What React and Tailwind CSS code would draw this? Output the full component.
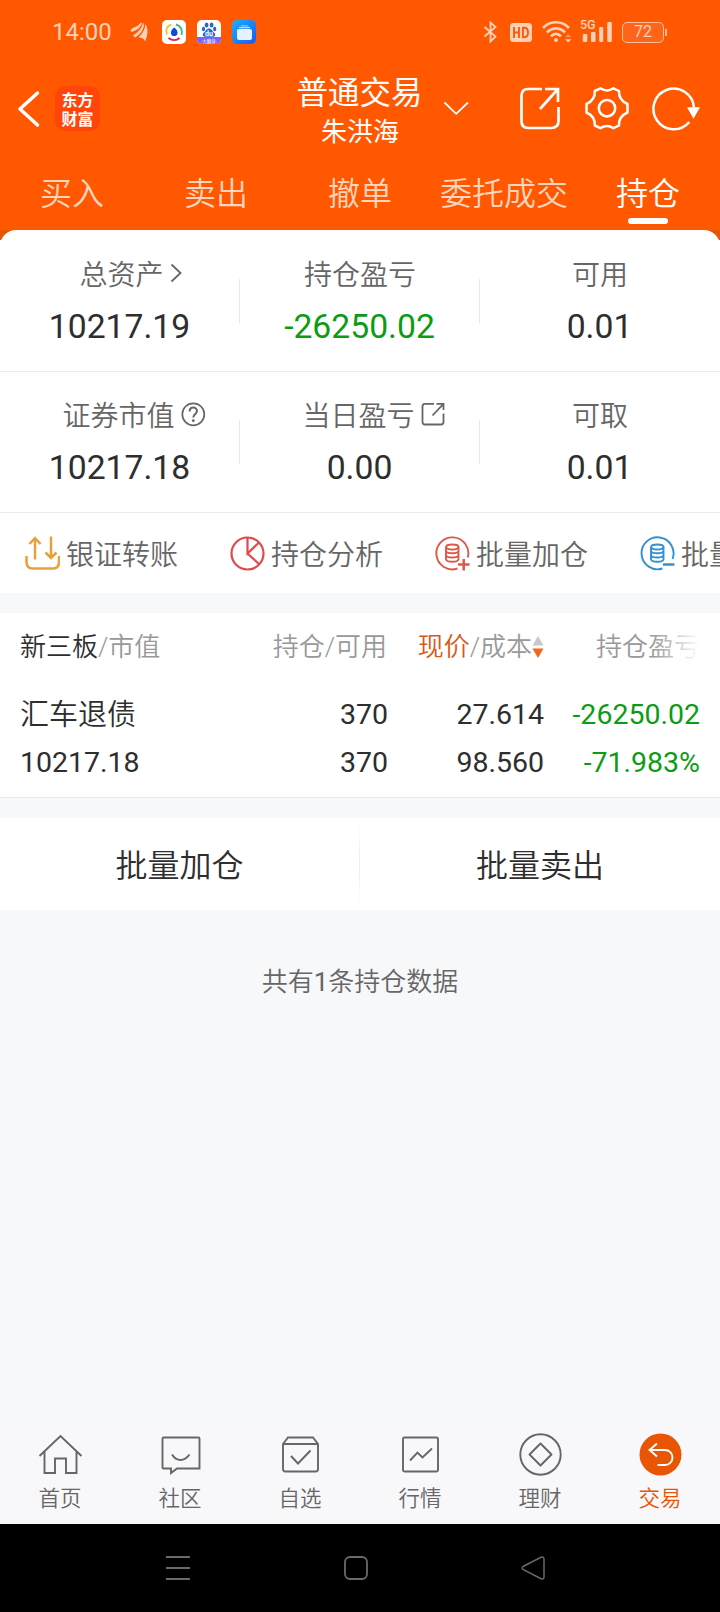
import React, { useState } from "react";
import clsx from "clsx";

const tabs = ["买入", "卖出", "撤单", "委托成交", "持仓"];

const assets = [
  [
    { label: "总资产", value: "10217.19", icon: "arrow" },
    { label: "持仓盈亏", value: "-26250.02", down: true },
    { label: "可用", value: "0.01" },
  ],
  [
    { label: "证券市值", value: "10217.18", icon: "help" },
    { label: "当日盈亏", value: "0.00", icon: "share" },
    { label: "可取", value: "0.01" },
  ],
];

const StatusBar = () => {
  return (
    <div className="flex h-16 items-center pl-[52px] text-[#ffd2b8]">
      <span className="w-[78px] text-[24px] leading-none">14:00</span>
      <svg width="18" height="20" viewBox="0 0 18 20" fill="currentColor">
        <path d="M.5 8.500C2 5.500 6 5 8 3.500C9 2.500 10 1 12 .5C11.500 5 7 8.500 1.500 10Z" />
        <path d="M3 13.500C8 10.500 12 6 13.300.5C15.500 5.500 10.500 13 5 15.500Z" />
        <path d="M8.500 15.500C12.500 11.500 15.300 7 15.300 2C18.800 6 17.500 15 15 19.500C14.500 17 12 15.500 8.500 15.500Z" />
      </svg>
      <svg className="ml-[14px]" width="24" height="24" viewBox="0 0 24 24" fill="none">
        <rect width="24" height="24" rx="5" fill="#fff" />
        <path d="M5 14.500C3 10 5 5.500 9.500 4.500" stroke="#f3c52e" strokeWidth="1.800" />
        <path d="M14 4.500C18.500 5.500 21 10 19.500 15" stroke="#36b98b" strokeWidth="1.800" />
        <path d="M6.500 18C10 20.800 14.500 20.800 17.500 18" stroke="#d5254f" strokeWidth="2" />
        <path d="M12.200 7.500C14.500 9 16 11.500 15.500 13.500C15 15.500 14 16 12.200 16C10.400 16 9.500 15.500 9 13.500C8.500 11.500 10 9 12.200 7.500Z" fill="#0b4fd0" />
      </svg>
      <svg className="ml-[11px]" width="24" height="24" viewBox="0 0 24 24">
        <rect width="24" height="24" rx="5" fill="#fff" />
        <path d="M0 17H24V19A5 5 0 0 1 19 24H5A5 5 0 0 1 0 19Z" fill="#7a62f4" />
        <g fill="#2468c8">
          <ellipse cx="9.600" cy="5" rx="1.900" ry="2.500" />
          <ellipse cx="14.600" cy="5" rx="1.900" ry="2.500" />
          <ellipse cx="6.500" cy="9" rx="1.600" ry="2.200" />
          <ellipse cx="17.700" cy="9" rx="1.600" ry="2.200" />
          <path d="M12 8.500C14.500 8.500 15 11 17 12.500C19.500 14.500 18 17 15 16.800H9C6 17 4.500 14.500 7 12.500C9 11 9.500 8.500 12 8.500Z" />
        </g>
        <text x="12" y="16" textAnchor="middle" fontSize="7" fontWeight="700" fill="#fff">du</text>
        <text x="12" y="22.500" textAnchor="middle" fontSize="4.500" fill="#fff">·大翻身·</text>
      </svg>
      <svg className="ml-[11px]" width="24" height="24" viewBox="0 0 24 24">
        <defs>
          <linearGradient id="wallet" x1="0" y1="0" x2="1" y2="1">
            <stop offset="0" stopColor="#1fb0f5" />
            <stop offset="1" stopColor="#1559f5" />
          </linearGradient>
        </defs>
        <rect width="24" height="24" rx="5" fill="url(#wallet)" />
        <rect x="9" y="5" width="7" height="1.200" rx=".6" fill="#6fc0fb" />
        <rect x="7" y="6.800" width="11" height="1.500" rx=".7" fill="#b4dcfd" />
        <rect x="5" y="9" width="15" height="11" rx="2" fill="#e6f2ff" />
      </svg>

      {/* right side */}
      <svg className="ml-[227px]" width="15" height="22" viewBox="0 0 15 22" fill="none" stroke="currentColor" strokeWidth="1.800">
        <path d="M1.500 6L12.500 15.500L7.500 20.500V1.500L12.500 6L1.500 15.500" />
      </svg>
      <svg className="ml-3" width="22" height="19" viewBox="0 0 22 19">
        <rect width="22" height="19" rx="3.500" fill="currentColor" />
        <path d="M4 4V15M9 4V15M4 9.500H9M13 4.800V14.200H14.500C17 14.200 18 12.500 18 9.500S17 4.800 14.500 4.800Z" fill="none" stroke="#ff5a05" strokeWidth="1.900" />
      </svg>
      <svg className="ml-[10px]" width="30" height="24" viewBox="0 0 30 24" fill="none" stroke="currentColor" strokeWidth="2.700">
        <path d="M1 8C8 .3 20 .3 27 8M5 12.500C10 7 18 7 23 12.500M9 16.300C12 13 16 13 19 16.300" />
        <circle cx="14" cy="20" r="2" fill="currentColor" stroke="none" />
        <path d="M23 17.300L26.200 14L29.500 17.300Z" fill="#ff9260" stroke="none" />
        <path d="M23 19.200L26.200 22.500L29.500 19.200Z" fill="currentColor" stroke="none" />
      </svg>
      <div className="relative ml-[9px] h-[22px] w-[32px]">
        <span className="absolute -left-px -top-[2px] text-[12.5px] font-medium leading-none">5G</span>
        <svg width="32" height="22" viewBox="0 0 32 22" fill="currentColor">
          <rect x="1.800" y="13" width="4.500" height="8" rx="1" />
          <rect x="10" y="11" width="4.500" height="10" rx="1" />
          <rect x="18.200" y="6" width="4" height="15" rx="1" />
          <rect x="26.300" y="1" width="4.500" height="20" rx="1" />
        </svg>
      </div>
      <div className="ml-[9px] flex h-[21px] w-[42px] items-center justify-center rounded-[5px] border-[1.5px] border-[#ffc09b] bg-[#ff651a] text-[16px] leading-none">
        72
      </div>
      <span className="ml-px h-[7px] w-[2px] bg-[#ffc09b]" />
    </div>
  );
};

const Header = () => {
  return (
    <div className="flex h-[88px] text-white">
      <svg className="ml-[17px] mt-[26px]" width="23" height="38" viewBox="0 0 23 38" fill="none" stroke="currentColor" strokeWidth="3.500" strokeLinecap="round" strokeLinejoin="round">
        <path d="M20.500 3L3 19L20.500 35" />
      </svg>
      <div className="ml-[15px] mt-[22px] flex h-[45px] w-[45px] items-center justify-center rounded-[10px] bg-[#ff4509] text-center font-['Noto_Sans_CJK_SC',sans-serif] text-[16px] font-bold leading-[19px]">
        <span>
          东方
          <br />
          财富
        </span>
      </div>
      <div className="ml-[160px] mt-[10px] flex w-[200px] flex-col items-center">
        <span className="mr-px text-[31.5px] leading-[40px]">普通交易</span>
        <span className="text-[26px] leading-[36px]">朱洪海</span>
      </div>
      <svg className="-ml-[17px] mt-[36px]" width="26" height="16" viewBox="0 0 26 16" fill="none" stroke="currentColor" strokeWidth="1.800">
        <path d="M1.500 2.500L13.200 13.800L25 2.500" />
      </svg>
      <svg className="ml-[50px] mt-[23px]" width="42" height="43" viewBox="0 0 42 43" fill="none" stroke="currentColor" strokeWidth="2.700">
        <path d="M23 2H9Q2.500 2 2.500 9V34Q2.500 41 9 41H32Q39.500 41 39.500 34V20" />
        <path d="M26 2H39V15M38.500 2.500L21 22" />
      </svg>
      <svg className="ml-[24px] mt-[22px]" width="46" height="45" viewBox="0 0 46 45" fill="none" stroke="currentColor" strokeWidth="2.500" strokeLinejoin="round">
        <path d="M15.500 2.300Q21.900 6.500 28.500 2.300L34 5Q33.500 14 42.500 18V26.500Q33.500 30.500 34 39.500L28.500 42.200Q21.900 38 15.500 42.200L9.800 39.500Q10.300 30.500 1.500 26.500V18Q10.300 14 9.800 5Z" />
        <circle cx="22" cy="22.200" r="8.200" />
      </svg>
      <svg className="ml-[21px] mt-[22px]" width="50" height="46" viewBox="0 0 50 46" fill="none" stroke="currentColor" strokeWidth="2.500">
        <path d="M37.300 36A20.300 20.300 0 1 1 42 21.500" />
        <path d="M35 21.300H48L41.500 32.800Z" fill="currentColor" stroke="none" />
      </svg>
    </div>
  );
};

const ShareIcon = ({ className }) => (
  <svg className={className} width="24" height="24" viewBox="0 0 24 24" fill="none" stroke="#666" strokeWidth="1.800">
    <path d="M13 1.800H4Q1.500 1.800 1.500 4.500V20Q1.500 22.500 4 22.500H20Q22.500 22.500 22.500 20V11.500" />
    <path d="M15.500 1.800H22.500V8M22.500 1.800L11.500 13.500" />
  </svg>
);

const LabelIcon = ({ icon }) => {
  if (icon === "arrow")
    return (
      <svg className="absolute left-full top-[7px] ml-[6px]" width="13" height="20" viewBox="0 0 13 20" fill="none" stroke="#666" strokeWidth="1.800">
        <path d="M1.500 1.500L10.500 10L1.500 18.500" />
      </svg>
    );
  if (icon === "help")
    return (
      <svg className="absolute left-full top-[5px] ml-[6px]" width="25" height="25" viewBox="0 0 25 25" fill="none" stroke="#666" strokeWidth="1.700">
        <circle cx="12.300" cy="12.300" r="11" />
        <path d="M8.600 9.500C8.600 4.300 16 4.500 16 9C16 12 12.300 12 12.300 15.500" strokeWidth="2" />
        <circle cx="12.300" cy="18.700" r="1.400" fill="#666" stroke="none" />
      </svg>
    );
  if (icon === "share") return <ShareIcon className="absolute left-full top-[5px] ml-[6px]" />;
  return null;
};

const AssetRow = ({ items }) => {
  return (
    <div className="flex h-[141px] shadow-[0_1px_0_#ebebeb]">
      {items.map((item, index) => (
        <div key={item.label} className="relative flex w-[240px] flex-col items-center pt-[26px]">
          <span
            className={clsx(
              "relative text-[28px] font-[350] leading-[40px] text-[#666]",
              item.icon === "arrow" && "ml-[3px]",
              (item.icon === "help" || item.icon === "share") && "mr-[3px]"
            )}
          >
            {item.label}
            <LabelIcon icon={item.icon} />
          </span>
          <span
            className={clsx(
              "mr-px mt-[11px] text-[33.7px] leading-[40px]",
              item.down ? "text-[#0c9c13]" : "text-[#2e2e2e]"
            )}
          >
            {item.value}
          </span>
          {index < 2 && <div className="absolute right-0 top-[49px] h-[44px] w-px bg-[#e8e8e8]" />}
        </div>
      ))}
    </div>
  );
};

const CoinIcon = ({ color, minus }) => (
  <svg width="35" height="35" viewBox="0 0 35 35" fill="none" stroke={color} strokeWidth="1.900">
    <path d={minus ? "M32.500 23A16 16 0 1 0 22.500 32.500" : "M32.800 21.500A16 16 0 1 0 22.500 32.500"} />
    <ellipse cx="17.300" cy="11" rx="6.200" ry="2.500" />
    <path d="M11 11V23.500C12 26.500 22.500 26.500 23.500 23.500V11M11 15C12 18 22.500 18 23.500 15M11 19.300C12 22.300 22.500 22.300 23.500 19.300" />
    <path d={minus ? "M23 28.500H34.500" : "M23 28.500H34.500M28.700 23V34.500"} strokeWidth="2.500" />
  </svg>
);

const Shortcuts = () => {
  return (
    <div className="flex h-[81px] overflow-hidden whitespace-nowrap pl-[25px] pt-[24px] text-[28px] font-[350] leading-[40px] text-[#666]">
      <div className="flex w-[205px] shrink-0 gap-[6px]">
        <svg width="35" height="35" viewBox="0 0 35 35" fill="none" stroke="#e8a03c" strokeWidth="2.500">
          <path d="M1.500 20V26Q1.500 32.500 8 32.500H27.500Q34 32.500 34 26V20" />
          <path d="M10 23.500V2M4.500 8L10 2L15.500 8M26 .5V22M20.500 16.500L26 22L31.500 16.500" />
        </svg>
        <span>银证转账</span>
      </div>
      <div className="flex w-[205px] shrink-0 gap-[6px]">
        <svg width="35" height="35" viewBox="0 0 35 35" fill="none" stroke="#df4a4d" strokeWidth="2.200">
          <circle cx="17.500" cy="17.500" r="16" />
          <path d="M17.500 1.500V17.500L29 6.500M17.500 17.500L29.500 28.500" />
        </svg>
        <span>持仓分析</span>
      </div>
      <div className="flex w-[205px] shrink-0 gap-[6px]">
        <CoinIcon color="#de5847" />
        <span>批量加仓</span>
      </div>
      <div className="flex w-[205px] shrink-0 gap-[6px]">
        <CoinIcon color="#3390d2" minus />
        <span>批量卖出</span>
      </div>
    </div>
  );
};

const Holdings = () => {
  return (
    <div className="mt-5 h-[185px] border-b border-[#e9eaec] bg-white pl-[20px] text-[#2e2e2e]">
      <div className="flex pt-[15px] text-[26px] font-[350] leading-[38px] text-[#999]">
        <div className="w-[180px]">
          <span className="text-[#2e2e2e]">新三板</span>/市值
        </div>
        <div className="w-[187px] text-right">持仓/可用</div>
        <div className="flex w-[157px] items-center justify-end">
          <span>
            <span className="text-[#d95a17]">现价</span>/成本
          </span>
          <svg width="12" height="24" viewBox="0 0 12 24">
            <path d="M6 1L11.500 10.500H.5Z" fill="#c8c8c8" />
            <path d="M6 23L11.500 13.500H.5Z" fill="#f3651a" />
          </svg>
        </div>
        <div className="relative ml-[52px] w-[104px] overflow-hidden whitespace-nowrap">
          持仓盈亏
          <div className="absolute right-0 top-0 h-full w-[48px] bg-linear-to-r from-white/0 to-white" />
        </div>
      </div>
      <div className="flex pt-[25px] text-[28.5px] leading-[48px]">
        <div className="w-[180px]">
          <div className="text-[29px] font-[350]">汇车退债</div>
          <div>10217.18</div>
        </div>
        <div className="w-[188px] text-right">
          <div>370</div>
          <div>370</div>
        </div>
        <div className="w-[156px] text-right">
          <div>27.614</div>
          <div>98.560</div>
        </div>
        <div className="w-[156px] text-right text-[#0c9c13]">
          <div>-26250.02</div>
          <div>-71.983%</div>
        </div>
      </div>
    </div>
  );
};

const navItems = [
  {
    label: "首页",
    icon: <path d="M1.500 24L22.500 4L43.500 24M6.500 20V41H17V26.500H28V41H38.500V20" />,
  },
  {
    label: "社区",
    icon: (
      <path d="M5.500 5.500H40.500Q41.500 5.500 41.500 6.500V36.500H19L13 41V36.500H5.500Q4.500 36.500 4.500 35.500V6.500Q4.500 5.500 5.500 5.500ZM14 22.500Q17.500 28 22.500 28T31.500 22.500" />
    ),
  },
  {
    label: "自选",
    icon: (
      <path d="M5 12L10 5.500H35L40 12V37Q40 39.500 37.500 39.500H7.500Q5 39.500 5 37ZM5 12H40M13 24L20 31.500L32.500 18.500" />
    ),
  },
  {
    label: "行情",
    icon: (
      <>
        <rect x="5" y="5.500" width="35" height="34" rx="1.500" />
        <path d="M12 28.500L19.500 20.500L24.500 25.500L34 16.500" />
      </>
    ),
  },
  {
    label: "理财",
    icon: (
      <>
        <circle cx="22.500" cy="22.500" r="20.200" />
        <path d="M22.500 11.500L33.500 22.500L22.500 33.500L11.500 22.500Z" strokeLinejoin="round" />
      </>
    ),
  },
  {
    label: "交易",
    icon: (
      <>
        <circle cx="22.500" cy="22.500" r="21" fill="#ea5504" stroke="none" />
        <path d="M19 11.500L11.500 18L19 24.500M11.500 18H27A7.500 7.500 0 0 1 27 33H19.500" stroke="#fff" />
      </>
    ),
  },
];

const BottomNav = () => {
  return (
    <div className="mt-auto flex h-[102px] bg-[#f8f8fa] text-[#666]">
      {navItems.map((item) => (
        <div key={item.label} className="flex w-[120px] flex-col items-center pt-[10px]">
          <svg width="45" height="45" viewBox="0 0 45 45" fill="none" stroke="currentColor" strokeWidth="1.900">
            {item.icon}
          </svg>
          <span className={clsx("mt-[6px] text-[21.5px] font-[350] leading-[32px]", item.label === "交易" && "text-[#ea5504]")}>
            {item.label}
          </span>
        </div>
      ))}
    </div>
  );
};

const App = () => {
  const [activeTab, setActiveTab] = useState("持仓");

  return (
    <div className="flex h-[1612px] w-[720px] flex-col overflow-hidden bg-[#f7f8fa] font-[Roboto,'Noto_Sans_CJK_SC',sans-serif]">
      <div className="h-[230px] bg-[#ff5800]">
        <StatusBar />
        <Header />
        <div className="flex h-[78px]">
          {tabs.map((tab) => (
            <button
              key={tab}
              onClick={() => setActiveTab(tab)}
              className={clsx(
                "flex w-[144px] flex-col items-center pt-[19px] text-[32px] font-[350] leading-[46px] whitespace-nowrap",
                tab === activeTab ? "text-white" : "text-[#ffd5bd]"
              )}
            >
              {tab}
              {tab === activeTab && <span className="mt-px h-[6px] w-[40px] rounded-full bg-white" />}
            </button>
          ))}
        </div>
      </div>
      <div className="bg-linear-to-b from-[#e95404] from-[10px] to-white to-[10px]">
        <div className="rounded-t-[16px] bg-white">
          <AssetRow items={assets[0]} />
          <AssetRow items={assets[1]} />
          <Shortcuts />
        </div>
      </div>
      <Holdings />
      <div className="mt-5 flex h-[92px] bg-white text-center text-[32px] font-[350] leading-[96px] text-[#2e2e2e]">
        <button className="w-[359px]">批量加仓</button>
        <div className="h-full w-px bg-linear-to-b from-white via-[#ececec] to-white" />
        <button className="w-[360px]">批量卖出</button>
      </div>
      <div className="mt-[53px] text-center text-[26px] font-[350] leading-[38px] text-[#666]">
        共有<span className="font-normal">1</span>条持仓数据
      </div>
      <BottomNav />
      <div className="flex h-[88px] shrink-0 items-center bg-black">
        <svg className="ml-[166px]" width="24" height="24" viewBox="0 0 24 24" stroke="#6a6a6a" strokeWidth="1.800">
          <path d="M0 1H24M0 12H24M0 23H24" />
        </svg>
        <svg className="ml-[154px]" width="24" height="24" viewBox="0 0 24 24" fill="none" stroke="#6a6a6a" strokeWidth="1.800">
          <rect x="1" y="1" width="22" height="22" rx="5" />
        </svg>
        <svg className="ml-[153px]" width="24" height="24" viewBox="0 0 24 24" fill="none" stroke="#6a6a6a" strokeWidth="1.500">
          <path d="M2 10.500L20 1.300Q23 .5 23 3V21Q23 23.500 20 22.700L2 13.500Q.3 12 2 10.500Z" />
        </svg>
      </div>
    </div>
  );
};

export default App;
